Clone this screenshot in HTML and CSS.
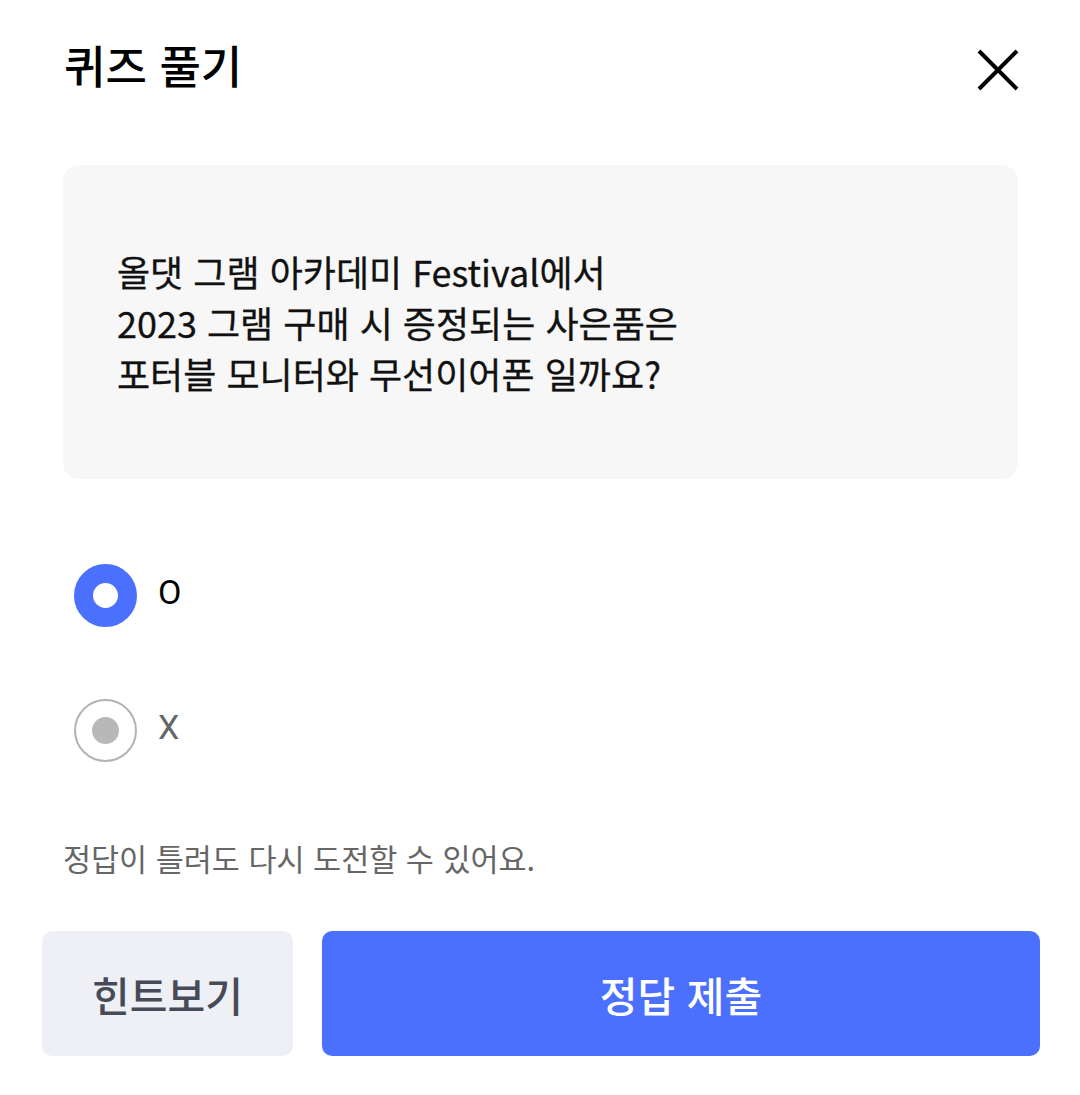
FILE: index.html
```html
<!DOCTYPE html>
<html lang="ko">
<head>
<meta charset="utf-8">
<link rel="stylesheet" href="styles.css">
</head>
<body>
<div class="sheet">
  <header class="header">
    <h1 class="title">퀴즈 풀기</h1>
    <button class="close" aria-label="닫기">
      <svg width="44" height="44" viewBox="0 0 44 44"><path d="M3 3 L41 41 M41 3 L3 41" stroke="#000" stroke-width="4" fill="none"/></svg>
    </button>
  </header>
  <section class="question">
    <p class="qtext">올댓 그램 아카데미 Festival에서<br>2023 그램 구매 시 증정되는 사은품은<br>포터블 모니터와 무선이어폰 일까요?</p>
  </section>
  <div class="options">
    <label class="option">
      <span class="radio radio-on"></span>
      <span class="opt-label opt-on">O</span>
    </label>
    <label class="option">
      <span class="radio radio-off"><span class="dot"></span></span>
      <span class="opt-label opt-off">X</span>
    </label>
  </div>
  <p class="notice">정답이 틀려도 다시 도전할 수 있어요.</p>
  <div class="actions">
    <button class="btn btn-hint">힌트보기</button>
    <button class="btn btn-submit">정답 제출</button>
  </div>
</div>
</body>
</html>
```
FILE: styles.css
```css
html, body {
  margin: 0;
  padding: 0;
  background: #fff;
}
body {
  font-family: "Noto Sans CJK KR", "Noto Sans", sans-serif;
  color: #000;
}
.sheet {
  width: 1080px;
  height: 1095px;
  box-sizing: border-box;
}
.header {
  display: flex;
  justify-content: space-between;
  align-items: center;
  height: 60px;
  margin-top: 38px;
  padding: 0 60px 0 64px;
}
.title {
  margin: 0;
  font-size: 45px;
  font-weight: 500;
  line-height: 60px;
  margin-top: -6px;
}
.close {
  border: 0;
  background: none;
  padding: 0;
  width: 44px;
  height: 44px;
  display: flex;
  margin-top: 4px;
}
.question {
  margin: 67px 62px 0 63px;
  height: 314px;
  background: #f7f7f7;
  border-radius: 16px;
  display: flex;
  align-items: center;
  padding-left: 54px;
}
.qtext {
  margin: 0;
  font-size: 36px;
  font-weight: 400;
  line-height: 51px;
  color: #111;
  -webkit-text-stroke: 0.3px #111;
}
.options {
  display: flex;
  flex-direction: column;
  gap: 72px;
  margin-top: 85px;
  padding-left: 74px;
}
.option {
  display: flex;
  align-items: center;
  height: 63px;
}
.radio {
  width: 63px;
  height: 63px;
  border-radius: 50%;
  box-sizing: border-box;
  display: flex;
  align-items: center;
  justify-content: center;
}
.radio-on {
  border: 19px solid #4a70fd;
  background: #fff;
}
.radio-off {
  border: 2px solid #b3b3b3;
}
.dot {
  width: 27px;
  height: 27px;
  border-radius: 50%;
  background: #b8b8b8;
}
.opt-label {
  margin-left: 21px;
  font-family: "Roboto", "Noto Sans", sans-serif;
  font-size: 34px;
  line-height: 40px;
  margin-top: -8px;
}
.opt-on { color: #000; }
.opt-off { color: #666; }
.notice {
  margin: 76px 0 0 63px;
  font-size: 30.5px;
  line-height: 40px;
  color: #666;
}
.actions {
  display: flex;
  gap: 29px;
  margin-top: 53px;
  padding: 0 40px 0 42px;
}
.btn {
  border: 0;
  height: 125px;
  border-radius: 10px;
  font-family: "Noto Sans CJK KR", sans-serif;
  font-size: 41px;
  font-weight: 500;
  padding: 0;
}
.btn-hint {
  width: 251px;
  background: #eff0f5;
  color: #474b57;
}
.btn-submit {
  flex: 1;
  background: #4a70fd;
  color: #fff;
}
```
